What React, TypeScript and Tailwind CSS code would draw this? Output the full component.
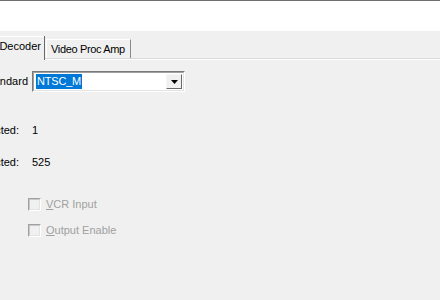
import React from "react";

const font = "font-['Tahoma','Liberation_Sans',Arial,sans-serif]";

// label text that is right-aligned against a fixed edge and spills off the left of the page
const Label = ({ text, width, className }: { text: string; width: string; className?: string }) => (
  <div className={`flex justify-end whitespace-nowrap shrink-0 ${width} ${className ?? ""}`}>
    <span>{text}</span>
  </div>
);

const Checkbox = ({ label, accel }: { label: string; accel: string }) => (
  <div className="flex items-center h-[13px]">
    <div className="ml-[28px] w-[13px] h-[13px] border border-t-[#a0a0a0] border-l-[#a0a0a0] border-b-[#ffffff] border-r-[#ffffff]">
      <div className="w-full h-full border border-t-[#c8c8c8] border-l-[#c8c8c8] border-b-[#e3e3e3] border-r-[#e3e3e3] bg-[#f0f0f0]" />
    </div>
    <span className="ml-[5px] text-[#a0a0a0] whitespace-nowrap">
      <u>{accel}</u>
      {label}
    </span>
  </div>
);

export default function App() {
  return (
    <div className={`w-[440px] h-[300px] overflow-hidden bg-[#f0f0f0] text-[11px] leading-[13px] text-black ${font}`}>
      <div className="h-px bg-[#6e6e6e]" />
      <div className="h-[30px] bg-white" />

      {/* tab strip */}
      <div className="mt-[5px] flex items-end h-[24px]">
        <div className="flex h-[24px]">
          <div className="w-[44px] h-full border-t border-t-white flex justify-end items-center pr-[3px] pb-[4px] overflow-visible">
            <span className="whitespace-nowrap">Video Decoder</span>
          </div>
          <div className="w-px h-full bg-[#696969]" />
        </div>
        <div className="flex flex-col flex-1 h-[24px]">
          <div className="flex flex-1">
            <div className="w-px" />
            <div className="mt-[3px] w-[85px] border-l border-t border-l-white border-t-white border-r border-r-[#8a8a8a] flex items-center pl-[4px] pt-[1px]">
              <span className="whitespace-nowrap tracking-[-0.35px]">Video Proc Amp</span>
            </div>
          </div>
          <div className="h-px bg-[#d9d9d9]" />
          <div className="h-px bg-white" />
        </div>
      </div>

      {/* Video Standard */}
      <div className="mt-[11px] flex items-center h-[21px]">
        <Label text="Video Standard" width="w-[28px]" />
        <div className="ml-[4px] w-[153px] h-[21px] border border-t-[#7a7a7a] border-l-[#7a7a7a] border-b-white border-r-white">
          <div className="h-full border border-t-[#a0a0a0] border-l-[#a0a0a0] border-b-[#e3e3e3] border-r-[#e3e3e3] bg-white flex items-center">
            <span className="ml-[2px] bg-[#0078d7] text-white px-[1px] leading-[15px] whitespace-nowrap tracking-[-0.2px]">NTSC_M</span>
            <div className="ml-auto mr-px w-[16px] h-[15px] bg-[#f0f0f0] border border-t-[#f5f5f5] border-l-[#f5f5f5] border-b-[#696969] border-r-[#696969] flex items-center justify-center">
              <svg width="7" height="4" viewBox="0 0 7 4">
                <path d="M0 0h7L3.5 4z" fill="#000" />
              </svg>
            </div>
          </div>
        </div>
      </div>

      {/* detected rows */}
      <div className="mt-[32px] flex items-center h-[13px]">
        <Label text="Signal Detected:" width="w-[19px]" />
        <span className="ml-[13px]">1</span>
      </div>
      <div className="mt-[19px] flex items-center h-[13px]">
        <Label text="Lines Detected:" width="w-[19px]" />
        <span className="ml-[13px]">525</span>
      </div>

      {/* disabled options */}
      <div className="mt-[29px]">
        <Checkbox accel="V" label="CR Input" />
      </div>
      <div className="mt-[13px]">
        <Checkbox accel="O" label="utput Enable" />
      </div>
    </div>
  );
}
